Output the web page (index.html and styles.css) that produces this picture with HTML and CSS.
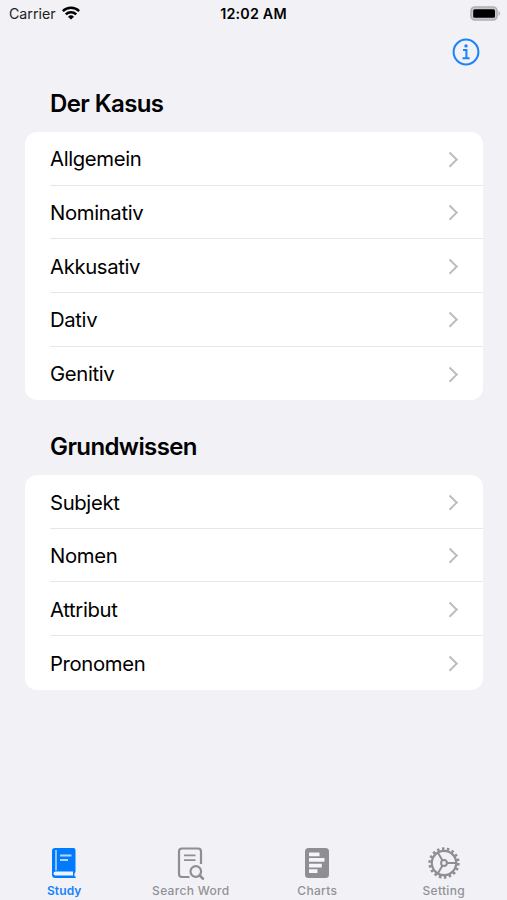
FILE: index.html
```html
<!DOCTYPE html>
<html lang="de">
<head>
  <meta charset="UTF-8" />
  <meta name="viewport" content="width=device-width, initial-scale=1.0" />
  <title>Study</title>
  <link rel="stylesheet" href="styles.css">
</head>
<body>
  <!-- status bar -->
  <div class="status-bar">
    <div class="carrier">
      <span>Carrier</span>
      <svg width="18" height="14" viewBox="0 0 18 14" fill="none" stroke="#000" stroke-width="2.5">
        <path d="M.8 5.1a11.6 11.6 0 0 1 16.4 0" />
        <path d="M3.8 8.4a7.4 7.4 0 0 1 10.4 0" />
        <path d="M9 13.6 6 10.700a4.300 4.300 0 0 1 6 0Z" fill="#000" stroke="none" />
      </svg>
    </div>
    <div class="time">12:02 AM</div>
    <div class="battery">
      <svg width="31" height="15" viewBox="0 0 31 15">
        <rect x="1" y="1" width="26" height="13" rx="4" fill="#c9c9cc" stroke="#b0b0b4" stroke-width="1.6" />
        <rect x="3.2" y="3.2" width="21.800" height="8.600" rx="1.600" fill="#000" />
        <path d="M28.500 5.200c2 .7 2 3.800 0 4.500Z" fill="#b0b0b4" />
      </svg>
    </div>
  </div>

  <div class="nav-bar">
    <svg width="28" height="28" viewBox="0 0 28 28" fill="none" stroke="#1a82fb" stroke-width="2">
      <circle cx="14" cy="14" r="12.4" />
      <path d="M11 12.1h3.4v7.9M10.6 20.2h7" />
      <circle cx="14" cy="7.900" r="1.700" fill="#1a82fb" stroke="none" />
    </svg>
  </div>

  <main>
    <h2>Der Kasus</h2>
    <ul class="list">
      <li><span>Allgemein</span><i class="chevron"></i></li>
      <li><span>Nominativ</span><i class="chevron"></i></li>
      <li><span>Akkusativ</span><i class="chevron"></i></li>
      <li><span>Dativ</span><i class="chevron"></i></li>
      <li><span>Genitiv</span><i class="chevron"></i></li>
    </ul>

    <h2>Grundwissen</h2>
    <ul class="list">
      <li><span>Subjekt</span><i class="chevron"></i></li>
      <li><span>Nomen</span><i class="chevron"></i></li>
      <li><span>Attribut</span><i class="chevron"></i></li>
      <li><span>Pronomen</span><i class="chevron"></i></li>
    </ul>
  </main>

  <!-- tab bar -->
  <nav class="tab-bar">
    <div class="tab active">
      <svg width="34" height="34" viewBox="0 0 34 34">
        <path d="M8 2h18.500a2 2 0 0 1 2 2v21.500a1.500 1.500 0 0 1-1 1.500v3.500h1.200V32H8.500A3.500 3.500 0 0 1 5 28.500V5a3 3 0 0 1 3-3Z" fill="#007aff" />
        <path d="M9 4v20.500" stroke="#b5d6fc" stroke-width="1.600" />
        <path d="M13 9.500h11.500M13 14h8" stroke="#b5d6fc" stroke-width="1.800" />
        <path d="M8.500 25.500h17.500v4H8.500a2 2 0 0 1 0-4Z" fill="#eef3fb" />
      </svg>
      <span>Study</span>
    </div>
    <div class="tab">
      <svg width="34" height="34" viewBox="0 0 34 34" fill="none" stroke="#8e8e93" stroke-width="2.200">
        <path d="M15.500 31H8a3 3 0 0 1-3-3V5.500a3 3 0 0 1 3-3h16a3 3 0 0 1 3 3v12.500" />
        <path d="M10 9.400h11.500M10 14.200h11.500" stroke-width="1.800" />
        <circle cx="21.800" cy="25.500" r="5.300" />
        <path d="m25.700 29.500 3.200 3.200" stroke-width="2.600" stroke-linecap="round" />
      </svg>
      <span>Search Word</span>
    </div>
    <div class="tab">
      <svg width="34" height="34" viewBox="0 0 34 34">
        <rect x="5" y="2" width="24" height="30" rx="3.500" fill="#8e8e93" />
        <path d="M9 6.400h10.500v3.800H9zM9 12h15.500v3.800H9zM9 17.700h12.800v3.800H9zM9 23.300h8.500v3.800H9z" fill="#f6f6fa" />
      </svg>
      <span>Charts</span>
    </div>
    <div class="tab">
      <svg width="34" height="34" viewBox="0 0 34 34" fill="none" stroke="#8e8e93" stroke-width="2">
        <circle cx="17" cy="17" r="14.300" stroke-width="2.700" stroke-dasharray="2.500 2.491" />
        <circle cx="17" cy="17" r="12.200" stroke-width="2.200" />
        <circle cx="17" cy="17" r="2.900" />
        <path d="M20 17h9M15.500 14.400 10.800 6.400M15.500 19.600l-4.700 8" />
      </svg>
      <span>Setting</span>
    </div>
  </nav>
</body>
</html>
```
FILE: styles.css
```css
* {
  box-sizing: border-box;
}
body {
  margin: 0;
  height: 900px;
  display: flex;
  flex-direction: column;
  background: #f1f1f6;
  color: #000;
  font-family: Inter, "Liberation Sans", sans-serif;
  overflow: hidden;
}
svg {
  display: block;
}

/* status bar */
.status-bar {
  display: grid;
  grid-template-columns: 1fr auto 1fr;
  align-items: center;
  height: 27px;
  padding: 0 6px 0 9px;
  font-size: 14.2px;
}
.carrier {
  display: flex;
  align-items: center;
  gap: 6px;
  color: #222;
}
.carrier svg {
  margin-top: -2px;
}
.time {
  margin-right: 3px;
  font-weight: 600;
  font-size: 14.3px;
  letter-spacing: 0.2px;
}
.battery {
  justify-self: end;
}

.nav-bar {
  display: flex;
  justify-content: flex-end;
  height: 62px;
  padding: 11px 27px 0 0;
}

/* grouped lists */
main {
  flex: 1;
  padding: 0 24px 0 25px;
}
h2 {
  margin: 0;
  height: 43px;
  padding-left: 25px;
  line-height: 30px;
  font-size: 24px;
  font-weight: 600;
  letter-spacing: -0.6px;
}
.list + h2 {
  margin-top: 32px;
}
.list {
  margin: 0;
  padding: 0;
  list-style: none;
  background: #fff;
  border-radius: 12px;
}
.list li {
  display: flex;
  align-items: center;
  justify-content: space-between;
  height: 53.65px;
  margin-left: 25px;
  padding: 1px 26px 0 0;
  border-bottom: 1px solid #e6e6e9;
  font-size: 20.3px;
  letter-spacing: -0.35px;
}
.list li:last-child {
  border-bottom: none;
}
.chevron {
  width: 10.5px;
  height: 10.5px;
  margin-right: 2px;
  border-top: 2.4px solid #bdbdc0;
  border-right: 2.4px solid #bdbdc0;
  transform: rotate(45deg);
}

/* tab bar */
.tab-bar {
  display: flex;
  height: 54px;
  padding-left: 1px;
}
.tab {
  flex: 1;
  display: flex;
  flex-direction: column;
  align-items: center;
  gap: 3px;
  color: #929297;
  font-size: 12px;
  font-weight: 500;
  line-height: 15px;
  letter-spacing: 0.3px;
}
.tab.active {
  color: #1682ff;
  font-weight: 600;
  letter-spacing: 0.1px;
}
```
